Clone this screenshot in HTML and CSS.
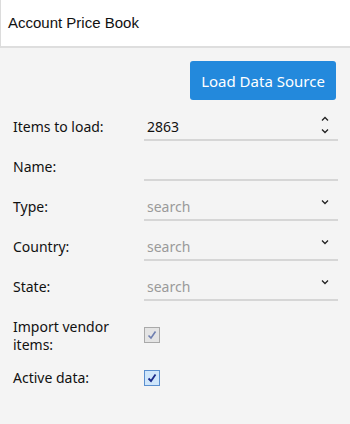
FILE: index.html
```html
<!DOCTYPE html>
<html>
<head>
<meta charset="utf-8">
<link rel="stylesheet" href="styles.css">
</head>
<body>
<div class="header">Account Price Book</div>
<div class="content">
  <div class="actions">
    <button class="btn">Load Data Source</button>
  </div>
  <div class="row">
    <div class="label">Items to load:</div>
    <div class="field">
      <span class="value">2863</span>
      <span class="spin">
        <svg width="8" height="5" viewBox="0 0 8 5"><path d="M1 4.5 L4 1.5 L7 4.5" fill="none" stroke="#222" stroke-width="1.3"/></svg>
        <svg width="8" height="5" viewBox="0 0 8 5"><path d="M1 0.5 L4 3.5 L7 0.5" fill="none" stroke="#222" stroke-width="1.3"/></svg>
      </span>
    </div>
  </div>
  <div class="row">
    <div class="label">Name:</div>
    <div class="field"></div>
  </div>
  <div class="row">
    <div class="label">Type:</div>
    <div class="field">
      <span class="placeholder">search</span>
      <svg class="chev" width="8" height="5" viewBox="0 0 8 5"><path d="M1 0.5 L4 3.5 L7 0.5" fill="none" stroke="#222" stroke-width="1.3"/></svg>
    </div>
  </div>
  <div class="row">
    <div class="label">Country:</div>
    <div class="field">
      <span class="placeholder">search</span>
      <svg class="chev" width="8" height="5" viewBox="0 0 8 5"><path d="M1 0.5 L4 3.5 L7 0.5" fill="none" stroke="#222" stroke-width="1.3"/></svg>
    </div>
  </div>
  <div class="row">
    <div class="label">State:</div>
    <div class="field">
      <span class="placeholder">search</span>
      <svg class="chev" width="8" height="5" viewBox="0 0 8 5"><path d="M1 0.5 L4 3.5 L7 0.5" fill="none" stroke="#222" stroke-width="1.3"/></svg>
    </div>
  </div>
  <div class="check-row import">
    <div class="label">Import vendor<br>items:</div>
    <span class="cb disabled">
      <svg width="10" height="10" viewBox="0 0 10 10"><path d="M1.5 5.5 L4 8 L8.5 1.5" fill="none" stroke="#6f7fb0" stroke-width="1.6"/></svg>
    </span>
  </div>
  <div class="check-row active">
    <div class="label">Active data:</div>
    <span class="cb checked">
      <svg width="10" height="10" viewBox="0 0 10 10"><path d="M1.5 5.5 L4 8 L8.5 1.5" fill="none" stroke="#1a2a8a" stroke-width="1.8"/></svg>
    </span>
  </div>
</div>
</body>
</html>
```
FILE: styles.css
```css
html, body {
  margin: 0;
  padding: 0;
}
body {
  background: #f4f4f4;
  font-family: "Noto Sans", "DejaVu Sans", sans-serif;
  font-size: 14px;
  color: #111;
  width: 350px;
  height: 424px;
  overflow: hidden;
}
.header {
  height: 46px;
  background: #fff;
  border-left: 1px solid #dcdcdc;
  border-bottom: 2px solid #dedede;
  box-sizing: border-box;
  height: 48px;
  padding-left: 7px;
  display: flex;
  align-items: center;
  font-family: "Liberation Sans", Arial, sans-serif;
  font-size: 15px;
  color: #111;
  padding-bottom: 2px;
}
.content {
  padding: 0 12px 0 13px;
}
.actions {
  display: flex;
  justify-content: flex-end;
  margin-top: 13px;
  padding-right: 2px;
}
.btn {
  width: 146px;
  height: 39px;
  background: #2389dc;
  color: #fff;
  border: none;
  border-radius: 3px;
  font-family: "Noto Sans", sans-serif;
  font-size: 15px;
  padding: 0;
}
.row {
  display: flex;
  align-items: center;
  height: 40px;
}
.actions + .row {
  margin-top: 7px;
}
.label {
  width: 131px;
  flex: none;
  line-height: 18px;
}
.field {
  flex: 1;
  height: 25px;
  border-bottom: 2px solid #d6d6d6;
  display: flex;
  align-items: center;
  padding-left: 3px;
  padding-right: 9px;
}
.value {
  flex: 1;
}
.placeholder {
  flex: 1;
  color: #9a9a9a;
}
.chev {
  margin-top: -8px;
}
.spin {
  display: flex;
  flex-direction: column;
  gap: 8px;
  margin-top: -2px;
}
.spin svg {
  display: block;
}
.check-row {
  display: flex;
  align-items: center;
}
.check-row.import {
  margin-top: 11px;
}
.check-row.active {
  margin-top: 15px;
}
.cb {
  width: 16px;
  height: 16px;
  box-sizing: border-box;
  display: flex;
  align-items: center;
  justify-content: center;
}
.cb.disabled {
  border: 1px solid #a9a9a9;
  background: #e4e4e4;
}
.cb.checked {
  border: 1px solid #5a8fcf;
  background: #cfe6fb;
}
.import .cb {
  margin-top: -3px;
}
```
